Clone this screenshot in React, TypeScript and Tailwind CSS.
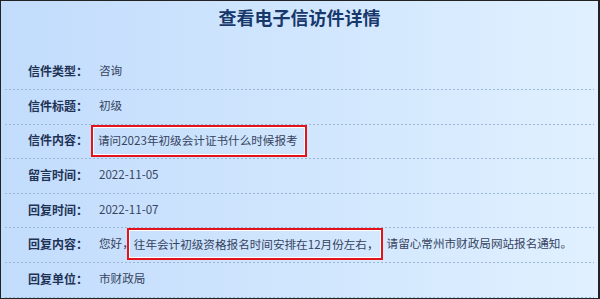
const FONT = { fontFamily: '"Microsoft YaHei", "Noto Sans CJK SC", "Noto Sans", sans-serif' };

type Row = { label: string; value: React.ReactNode };

function Boxed({ children, className = '' }: { children: React.ReactNode; className?: string }) {
  return (
    <span
      className={`inline-flex h-[32px] items-center border-2 border-[#e3131b] px-[5px] shadow-[inset_0_0_0_1px_#ffffff] ${className}`}
    >
      {children}
    </span>
  );
}

const rows: Row[] = [
  { label: '信件类型：', value: '咨询' },
  { label: '信件标题：', value: '初级' },
  {
    label: '信件内容：',
    value: <Boxed className="-ml-[8px] self-start pr-[7px]">请问2023年初级会计证书什么时候报考</Boxed>,
  },
  { label: '留言时间：', value: '2022-11-05' },
  { label: '回复时间：', value: '2022-11-07' },
  {
    label: '回复内容：',
    value: (
      <span className="flex h-full items-start">
        <span className="self-center">您好，</span>
        <Boxed className="-ml-[7px] pr-[2px]">往年会计初级资格报名时间安排在12月份左右，</Boxed>
        <span className="ml-[4px] self-center">请留心常州市财政局网站报名通知。</span>
      </span>
    ),
  },
  { label: '回复单位：', value: '市财政局' },
];

export default function App() {
  return (
    <div
      className="box-border h-[299px] w-[600px] overflow-hidden border-t border-l border-r-2 border-b border-[#222] bg-[linear-gradient(to_right,#c2dcfc,#d3e8fe_60%,#e0f0ff)]"
      style={FONT}
    >
      <div className="flex h-[54.4px] justify-center pt-[4px]">
        <h1 className="text-[18px] leading-[24px] font-bold text-[#17386b]">查看电子信访件详情</h1>
      </div>
      <div className="px-[4px]">
        {rows.map((r) => (
          <div key={r.label} className="flex flex-col">
            <div className="flex h-[33.6px] items-center pb-[2px]">
              <span className="w-[94px] shrink-0 pl-[23px] text-[12px] font-bold text-[#1e3356]">{r.label}</span>
              <span className="flex h-full items-center text-[11.6px] text-[#36435e]">{r.value}</span>
            </div>
            <div className="h-px bg-[linear-gradient(to_right,#9cb6d6_50%,transparent_50%)] bg-[length:4px_1px] bg-repeat-x" />
          </div>
        ))}
      </div>
    </div>
  );
}
